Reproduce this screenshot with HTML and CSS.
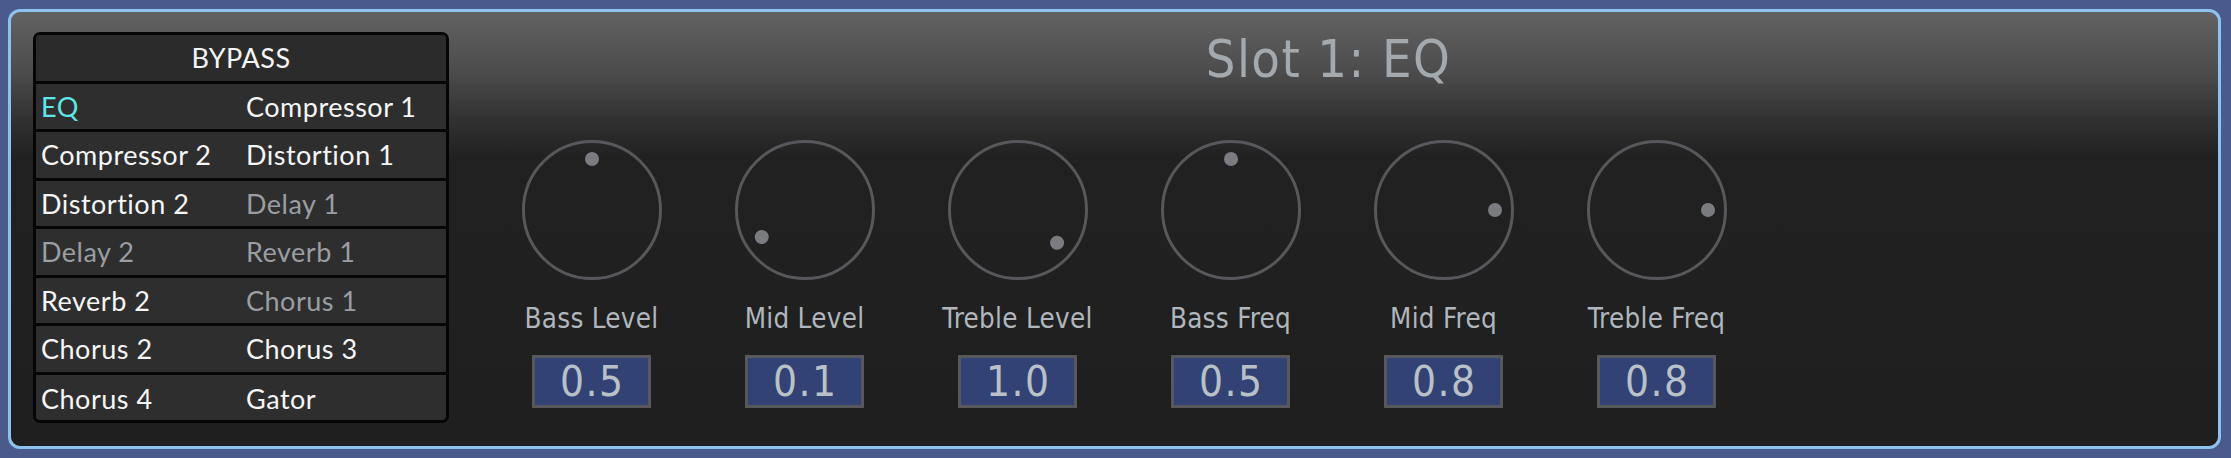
FILE: index.html
```html
<!DOCTYPE html>
<html lang="en">
<head>
  <meta charset="UTF-8">
  <meta name="viewport" content="width=device-width, initial-scale=1.0">
  <title>Slot 1: EQ</title>
  <link rel="stylesheet" href="styles.css">
</head>
<body>
  <div class="panel">
    <div class="slots">
      <div class="slot-row header"><span class="bypass">BYPASS</span></div>
      <div class="slot-row">
        <span class="slot active">EQ</span>
        <span class="slot">Compressor 1</span>
      </div>
      <div class="slot-row">
        <span class="slot">Compressor 2</span>
        <span class="slot">Distortion 1</span>
      </div>
      <div class="slot-row">
        <span class="slot">Distortion 2</span>
        <span class="slot off">Delay 1</span>
      </div>
      <div class="slot-row">
        <span class="slot off">Delay 2</span>
        <span class="slot off">Reverb 1</span>
      </div>
      <div class="slot-row">
        <span class="slot">Reverb 2</span>
        <span class="slot off">Chorus 1</span>
      </div>
      <div class="slot-row">
        <span class="slot">Chorus 2</span>
        <span class="slot">Chorus 3</span>
      </div>
      <div class="slot-row last">
        <span class="slot">Chorus 4</span>
        <span class="slot">Gator</span>
      </div>
    </div>

    <div class="editor">
      <h1 class="title">Slot 1: EQ</h1>
      <div class="knobs">
        <div class="control">
          <div class="knob"><div class="pointer" style="--angle: 0deg"><span class="dot"></span></div></div>
          <div class="label">Bass Level</div>
          <div class="value">0.5</div>
        </div>
        <div class="control">
          <div class="knob"><div class="pointer" style="--angle: -122deg"><span class="dot"></span></div></div>
          <div class="label">Mid Level</div>
          <div class="value">0.1</div>
        </div>
        <div class="control">
          <div class="knob"><div class="pointer" style="--angle: 130deg"><span class="dot"></span></div></div>
          <div class="label">Treble Level</div>
          <div class="value">1.0</div>
        </div>
        <div class="control">
          <div class="knob"><div class="pointer" style="--angle: 0deg"><span class="dot"></span></div></div>
          <div class="label">Bass Freq</div>
          <div class="value">0.5</div>
        </div>
        <div class="control">
          <div class="knob"><div class="pointer" style="--angle: 90deg"><span class="dot"></span></div></div>
          <div class="label">Mid Freq</div>
          <div class="value">0.8</div>
        </div>
        <div class="control">
          <div class="knob"><div class="pointer" style="--angle: 90deg"><span class="dot"></span></div></div>
          <div class="label">Treble Freq</div>
          <div class="value">0.8</div>
        </div>
      </div>
    </div>
  </div>
</body>
</html>
```

FILE: styles.css
```css
body {
  margin: 0;
  background: #4a5a8b;
  font-family: 'DejaVu Sans Condensed', 'DejaVu Sans', sans-serif;
  overflow: hidden;
}
.panel {
  box-sizing: border-box;
  width: 2213px;
  height: 440px;
  margin: 9px 10px 9px 8px;
  padding: 20px 0 0 22px;
  display: flex;
  border: 3px solid #8ec2ee;
  border-radius: 12px;
  background: linear-gradient(to bottom, #626262 0, #4c4c4c 60px, #313131 108px, #212121 145px, #1f1f1f 100%);
}

/* slot list */
.slots {
  box-sizing: border-box;
  width: 416px;
  height: 391px;
  border: 3px solid #050505;
  border-radius: 7px;
  background: #2e2e2e;
  overflow: hidden;
  font-family: 'Lato', 'Open Sans', sans-serif;
  font-size: 27px;
  letter-spacing: 0.5px;
  color: #f6f6f6;
}
.slot-row {
  box-sizing: border-box;
  height: 48.5px;
  display: grid;
  grid-template-columns: 1fr 1fr;
  align-items: center;
  border-bottom: 3px solid #050505;
}
.slot-row.last {
  border-bottom: none;
}
.slot-row.header {
  display: flex;
  justify-content: center;
  background: #2b2b2b;
}
.slot {
  padding-left: 5px;
  white-space: nowrap;
}
.slot.active {
  color: #5ee6e8;
}
.slot.off {
  color: #9a9ea3;
}

/* editor */
.editor {
  flex: 1;
  display: flex;
  flex-direction: column;
}
.title {
  margin: 0 0 0 -10px;
  text-align: center;
  font-size: 52px;
  font-weight: normal;
  line-height: 54px;
  letter-spacing: 1.4px;
  color: #a4a9ae;
}
.knobs {
  display: flex;
  margin: 54px 0 0 36px;
}
.control {
  width: 213px;
  display: flex;
  flex-direction: column;
  align-items: center;
}
.knob {
  box-sizing: border-box;
  position: relative;
  width: 140px;
  height: 140px;
  border: 3px solid #58585c;
  border-radius: 50%;
}
.pointer {
  position: absolute;
  inset: 0;
  transform: rotate(var(--angle));
}
.dot {
  position: absolute;
  top: 9px;
  left: 50%;
  width: 14px;
  height: 14px;
  margin-left: -7px;
  border-radius: 50%;
  background: #7b7c80;
}
.label {
  margin-top: 22px;
  font-size: 27.5px;
  line-height: 32px;
  letter-spacing: 0.3px;
  color: #b0b6bc;
  white-space: nowrap;
}
.value {
  box-sizing: border-box;
  width: 119px;
  height: 53px;
  margin-top: 21px;
  border: 3px solid #58585c;
  background: #324274;
  color: #b8c0c8;
  font-size: 42px;
  line-height: 47px;
  letter-spacing: 1.5px;
  text-indent: 1.5px;
  text-align: center;
}
```
